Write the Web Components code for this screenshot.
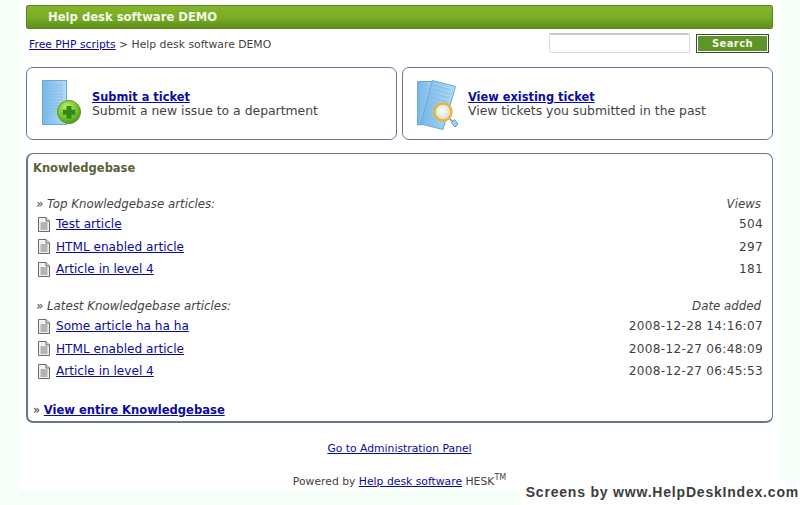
<!DOCTYPE html>
<html>
<head>
<meta charset="utf-8">
<title>Help desk software DEMO</title>
<style>
  html, body { margin: 0; padding: 0; height: 505px; overflow: hidden; background: #f5fff8; }
  body { font-family: "DejaVu Sans", Verdana, sans-serif; color: #3a3a3a; }
</style>
</head>
<body>

<hd-page>
  <hd-titlebar>Help desk software DEMO</hd-titlebar>
  <hd-crumbs>
    <a href="#">Free PHP scripts</a> &gt; Help desk software DEMO
  </hd-crumbs>
  <hd-actions>
    <hd-action-card icon="add" title="Submit a ticket">Submit a new issue to a department</hd-action-card>
    <hd-action-card icon="view" title="View existing ticket">View tickets you submitted in the past</hd-action-card>
  </hd-actions>
  <hd-kb>
    <hd-kb-list heading="» Top Knowledgebase articles:" column="Views">
      <hd-kb-row value="504">Test article</hd-kb-row>
      <hd-kb-row value="297">HTML enabled article</hd-kb-row>
      <hd-kb-row value="181">Article in level 4</hd-kb-row>
    </hd-kb-list>
    <hd-kb-list heading="» Latest Knowledgebase articles:" column="Date added">
      <hd-kb-row value="2008-12-28 14:16:07">Some article ha ha ha</hd-kb-row>
      <hd-kb-row value="2008-12-27 06:48:09">HTML enabled article</hd-kb-row>
      <hd-kb-row value="2008-12-27 06:45:53">Article in level 4</hd-kb-row>
    </hd-kb-list>
  </hd-kb>
  <hd-footer></hd-footer>
</hd-page>
<hd-credit>Screens by www.HelpDeskIndex.com</hd-credit>

<script>
const ICONS = {
  add: `
    <svg width="42" height="48" viewBox="0 0 42 48">
      <defs>
        <linearGradient id="pg" x1="0" x2="1" y1="0" y2="0">
          <stop offset="0" stop-color="#74b8ea"/><stop offset="1" stop-color="#b5dcf6"/>
        </linearGradient>
        <radialGradient id="gr" cx="0.4" cy="0.3" r="0.8">
          <stop offset="0" stop-color="#c4ec6a"/><stop offset="0.6" stop-color="#72bd2c"/><stop offset="1" stop-color="#3f8f18"/>
        </radialGradient>
      </defs>
      <rect x="0.5" y="0.5" width="24" height="44" fill="url(#pg)" stroke="#6aa7d6"/>
      <path d="M4 5h17M4 8h17M4 11h17M4 14h17M4 17h17M4 20h17M4 23h17M4 26h17M4 29h12M4 32h10" stroke="#8abbe0" stroke-width="1"/>
      <circle cx="27" cy="32" r="11.5" fill="url(#gr)" stroke="#4c9a1e"/>
      <path d="M24.500 26h5v3.700h3.700v5h-3.700v3.700h-5v-3.700h-3.700v-5h3.700z" fill="#2f8a1a"/>
    </svg>`,
  view: `
    <svg width="42" height="52" viewBox="0 0 42 52">
      <defs>
        <linearGradient id="pv" x1="0" x2="1" y1="0" y2="0">
          <stop offset="0" stop-color="#74b8ea"/><stop offset="1" stop-color="#b5dcf6"/>
        </linearGradient>
        <radialGradient id="gl" cx="0.45" cy="0.4" r="0.6">
          <stop offset="0" stop-color="#ffffff"/><stop offset="1" stop-color="#d6d6cc"/>
        </radialGradient>
      </defs>
      <path d="M0.5 1.500H18L22 43 0.5 45z" fill="url(#pv)" stroke="#6aa7d6"/>
      <path d="M3 5h14M3 9h14M3 13h14M3 17h14M3 21h14M3 25h14M3 29h14M3 33h14M3 37h14" stroke="#8abbe0"/>
      <path d="M15.500 0.5 38.500 6.500 26 49.500 4 44z" fill="url(#pv)" stroke="#6aa7d6"/>
      <path d="M15.500 5 34 10M14.500 9 33 14M13.500 13 32 18M12.500 17 31 22M11.500 21 19 23M10.500 25 16 26.500M9.500 29 15 30.500M8.500 33 16 35M7.500 37 19 40" stroke="#8abbe0"/>
      <path d="M32 38 L36 42" stroke="#5a8fb5" stroke-width="1.500"/>
      <path d="M34.500 42.500 37.500 39.500 41 44 38 47z" fill="#a5d5ee" stroke="#5a8fb5"/>
      <circle cx="26" cy="32" r="8.500" fill="url(#gl)" stroke="#e8b636" stroke-width="2.500"/>
    </svg>`
};

// small base class: builds the shadow root from a string
class HdElement extends HTMLElement {
  connectedCallback() {
    if (this.shadowRoot) return;
    this.attachShadow({ mode: "open" });
    this.shadowRoot.innerHTML = this.render();
  }
}

class HdPage extends HdElement {
  render() {
    return `<style>
      :host { display: flex; flex-direction: column; box-sizing: border-box; width: 760px; height: 491px; margin: 0 20px; padding: 5px 6px 0; background: #fff; }
    </style><slot></slot>`;
  }
}

class HdTitlebar extends HdElement {
  render() {
    return `<style>
      :host { display: flex; align-items: center; box-sizing: border-box; width: 747px; height: 24px; padding-left: 21px; border: 1px solid #5a8a1e; border-radius: 2px;
        background: linear-gradient(#85b52c, #78ab26 55%, #5d9018); color: #f4f8e6; font: bold 11.600px "DejaVu Sans", sans-serif; }
    </style><slot></slot>`;
  }
}

class HdCrumbs extends HdElement {
  render() {
    return `<style>
      :host { display: flex; align-items: center; justify-content: space-between; width: 747px; box-sizing: border-box; height: 28px; padding: 0 4px 0 3px; font-size: 10.800px; color: #3f3f3f; }
      span { padding-top: 2px; }
      form { display: flex; align-items: center; gap: 6px; margin: 0; }
      input { box-sizing: border-box; width: 141px; height: 20px; margin: 0; border: 1px solid #dcdcdc; border-top: 2px solid #c8c8c8; border-radius: 2px; background: #fff; }
      button { box-sizing: border-box; width: 73px; height: 19px; padding: 0; border: 1px solid #3c4a2c; outline: 1px solid #fff; outline-offset: -2px; background: #5d9528;
        color: #f4f8e6; font: bold 10px "DejaVu Sans", sans-serif; letter-spacing: .4px; }
      ::slotted(a) { color: #0a0a9a; }
    </style>
    <span><slot></slot></span>
    <form><input type="text"><button type="button">Search</button></form>`;
  }
}

class HdActions extends HdElement {
  render() {
    return `<style>
      :host { display: grid; grid-template-columns: 371px 371px; column-gap: 5px; margin-top: 10px; }
    </style><slot></slot>`;
  }
}

class HdActionCard extends HdElement {
  render() {
    const icon = this.getAttribute("icon");
    return `<style>
      :host { display: flex; align-items: center; box-sizing: border-box; height: 73px; padding-left: 15px; border: 1px solid #66788f; border-radius: 7px; background: #fff; }
      .ic { display: flex; width: 50px; flex: none; }
      .ic.view svg { margin: 5px 0 0 -1px; }
      .tx { font-size: 12.400px; line-height: 14px; color: #3f4448; }
      a { display: block; font-size: 11.400px; font-weight: bold; color: #0a0aa8; }
    </style>
    <div class="ic ${icon}">${ICONS[icon]}</div>
    <div class="tx"><a href="#">${this.getAttribute("title")}</a><slot></slot></div>`;
  }
}

class HdKb extends HdElement {
  render() {
    return `<style>
      :host { display: block; box-sizing: border-box; width: 747px; height: 270px; margin-top: 13px; padding: 6px 10px 0 5px; border: 1px solid #66788f; border-width: 1px 1px 2px 2px; border-radius: 7px; background: #fff; }
      h3 { margin: 0 0 20px; font-size: 11.500px; line-height: 16px; font-weight: bold; color: #5c6236; }
      .more { margin-top: 19.500px; font-size: 11.550px; line-height: 16px; color: #333; }
      a { font-weight: bold; color: #0a0aa8; }
    </style>
    <h3>Knowledgebase</h3>
    <slot></slot>
    <div class="more">» <a href="#">View entire Knowledgebase</a></div>`;
  }
}

class HdKbList extends HdElement {
  render() {
    return `<style>
      :host { display: block; padding-left: 3px; }
      :host(:not(:first-child)) { margin-top: 17.500px; }
      .head { display: flex; justify-content: space-between; height: 16px; line-height: 16px; font-size: 11.800px; font-style: italic; color: #444; padding: 0 1px 1px 0; }
    </style>
    <div class="head"><span>${this.getAttribute("heading")}</span><span>${this.getAttribute("column")}</span></div>
    <slot></slot>`;
  }
}

class HdKbRow extends HdElement {
  render() {
    return `<style>
      :host { display: flex; align-items: center; height: 22.500px; font-size: 12.100px; color: #3f3f3f; }
      svg { flex: none; margin: 0 6px 0 2px; }
      a { color: #0a0a9a; }
      span { margin: 0 -1px 0 auto; letter-spacing: .3px; }
    </style>
    <svg width="12" height="15" viewBox="0 0 12 15">
      <path d="M.5.5H8L11.500 4V14.500H.5z" fill="#f2f2f2" stroke="#6a6a6a"/>
      <path d="M8 .5V4H11.500" fill="#ddd" stroke="#6a6a6a"/>
      <path d="M2.500 6H9.500M2.500 8H9.500M2.500 10H9.500M2.500 12H9.500" stroke="#777"/>
    </svg>
    <a href="#"><slot></slot></a><span>${this.getAttribute("value")}</span>`;
  }
}

class HdFooter extends HdElement {
  render() {
    return `<style>
      :host { display: flex; flex-direction: column; align-items: center; width: 747px; font-size: 10.800px; color: #3f3f3f; padding-top: 19px; }
      a { color: #0a0a9a; }
      .admin { line-height: 14px; }
      .pow { margin-top: 19px; line-height: 14px; }
      sup { font-size: 8px; line-height: 0; }
    </style>
    <div class="admin"><a href="#">Go to Administration Panel</a></div>
    <div class="pow">Powered by <a href="#">Help desk software</a> HESK<sup>TM</sup></div>`;
  }
}

class HdCredit extends HdElement {
  render() {
    return `<style>
      :host { position: absolute; left: 520px; right: 0; top: 481px; bottom: 0; display: flex; align-items: center; justify-content: flex-end; box-sizing: border-box; height: 24px; padding: 0 1px 1px 0; background: #fff; font: bold 14px/17px "Liberation Sans", Arial, sans-serif; letter-spacing: .8px; color: #3c3c3c; white-space: nowrap; }
    </style><slot></slot>`;
  }
}

customElements.define("hd-page", HdPage);
customElements.define("hd-titlebar", HdTitlebar);
customElements.define("hd-crumbs", HdCrumbs);
customElements.define("hd-actions", HdActions);
customElements.define("hd-action-card", HdActionCard);
customElements.define("hd-kb", HdKb);
customElements.define("hd-kb-list", HdKbList);
customElements.define("hd-kb-row", HdKbRow);
customElements.define("hd-footer", HdFooter);
customElements.define("hd-credit", HdCredit);
</script>
</body>
</html>
